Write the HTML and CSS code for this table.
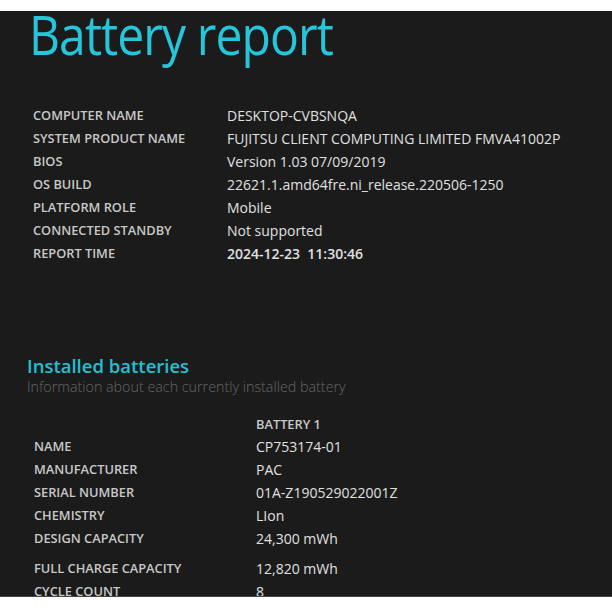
FILE: index.html
```html
<!DOCTYPE html>
<html lang="en">
<head>
<meta charset="utf-8">
<title>Battery report</title>
<link rel="stylesheet" href="styles.css">
</head>
<body>
<div class="page">
  <h1 class="title">Battery report</h1>
  <div class="info system">
    <div class="label">COMPUTER NAME</div><div class="value">DESKTOP-CVBSNQA</div>
    <div class="label">SYSTEM PRODUCT NAME</div><div class="value">FUJITSU CLIENT COMPUTING LIMITED FMVA41002P</div>
    <div class="label">BIOS</div><div class="value">Version 1.03 07/09/2019</div>
    <div class="label">OS BUILD</div><div class="value">22621.1.amd64fre.ni_release.220506-1250</div>
    <div class="label">PLATFORM ROLE</div><div class="value">Mobile</div>
    <div class="label">CONNECTED STANDBY</div><div class="value">Not supported</div>
    <div class="label">REPORT TIME</div><div class="value strong">2024-12-23&nbsp; 11:30:46</div>
  </div>
  <h2 class="section-title">Installed batteries</h2>
  <div class="section-desc">Information about each currently installed battery</div>
  <div class="info battery">
    <div class="label head"></div><div class="label head">BATTERY 1</div>
    <div class="label">NAME</div><div class="value">CP753174-01</div>
    <div class="label">MANUFACTURER</div><div class="value">PAC</div>
    <div class="label">SERIAL NUMBER</div><div class="value">01A-Z190529022001Z</div>
    <div class="label">CHEMISTRY</div><div class="value">LIon</div>
    <div class="label">DESIGN CAPACITY</div><div class="value">24,300 mWh</div>
    <div class="label gap">FULL CHARGE CAPACITY</div><div class="value gap">12,820 mWh</div>
    <div class="label">CYCLE COUNT</div><div class="value">8</div>
  </div>
</div>
</body>
</html>
```
FILE: styles.css
```css
html, body {
  margin: 0;
  padding: 0;
  background: #ffffff;
}
.page {
  margin-top: 11px;
  height: 585px;
  overflow: hidden;
  background: #1b1b1b;
  border-bottom: 1px solid #474747;
  font-family: "Open Sans", "Noto Sans", sans-serif;
  color: #d6d6d6;
}
.title {
  margin: 0;
  padding: 0 0 0 29px;
  font-weight: 400;
  font-size: 48px;
  line-height: 52px;
  height: 52px;
  color: #26c5da;
  letter-spacing: -0.9px;
  transform: scaleY(1.13);
  transform-origin: 0 44.6px;
}
.info {
  display: grid;
  align-items: start;
}
.system {
  grid-template-columns: 194px 1fr;
  padding-left: 33px;
  margin-top: 41px;
}
.battery {
  grid-template-columns: 222px 1fr;
  padding-left: 34px;
  margin-top: 18px;
}
.label {
  font-size: 12.8px;
  line-height: 23px;
  font-weight: 600;
  color: #c8c8c8;
}
.label.head {
  line-height: 21px;
}
.value {
  font-size: 14px;
  line-height: 23px;
  color: #e0e0e0;
}
.value.strong {
  font-weight: 600;
}
.gap {
  padding-top: 7px;
}
.section-title {
  margin: 89px 0 0 0;
  padding-left: 27px;
  font-size: 18.5px;
  font-weight: 600;
  line-height: 24px;
  color: #22c0d3;
}
.section-desc {
  padding-left: 27px;
  font-size: 14.3px;
  font-weight: 300;
  line-height: 18px;
  color: #666666;
}
```
